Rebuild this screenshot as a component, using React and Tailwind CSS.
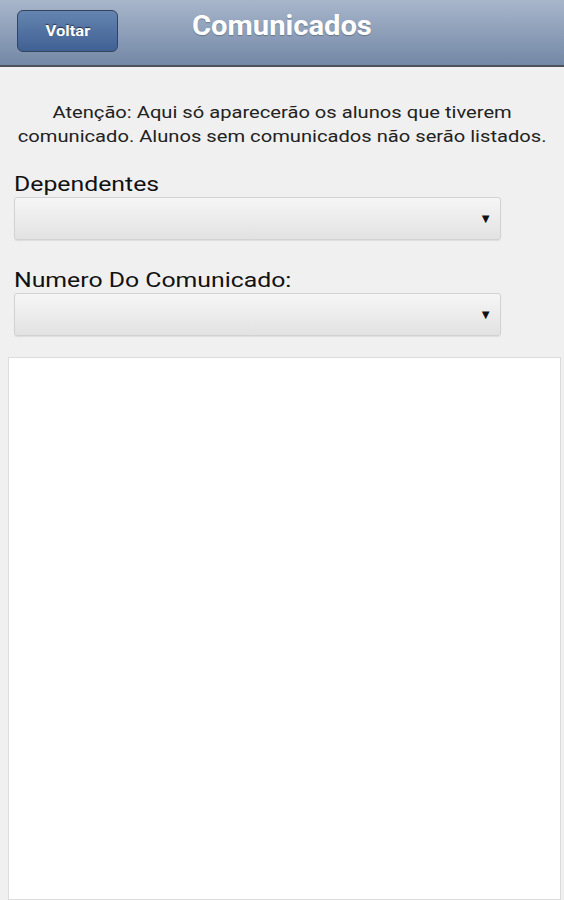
import React from "react";

const Select = () => (
  <div className="relative h-[43px] w-[487px] rounded-[3px] border border-[#d2d2d2] bg-gradient-to-b from-[#f6f6f6] to-[#e2e2e2] shadow-[0_1px_1px_rgba(0,0,0,0.08)]">
    <span className="absolute right-[8px] top-[11px] text-[13px] leading-[20px] text-[#111]">▼</span>
  </div>
);

const App = () => {
  return (
    <div className="flex h-[900px] w-[564px] flex-col overflow-hidden bg-[#f0f0f0] font-['Roboto',sans-serif]">
      <header className="relative flex h-[67px] shrink-0 items-start border-b-2 border-[#4d5359] bg-gradient-to-b from-[#a8b6cb] to-[#7388a6]">
        <button className="ml-[17px] mt-[10px] flex h-[42px] w-[101px] items-center justify-center rounded-[6px] border border-[#33445e] bg-gradient-to-b from-[#6584b0] to-[#3f6193] text-[14px] font-bold text-white [text-shadow:0_-1px_1px_rgba(0,0,0,0.6)]">
          <span className="inline-block scale-x-[1.18]">Voltar</span>
        </button>
        <h1 className="absolute left-[192px] top-[8px] origin-left scale-x-[1.08] text-[27px] font-bold leading-[36px] text-white [text-shadow:0_1px_1px_rgba(0,0,0,0.25)]">
          Comunicados
        </h1>
      </header>

      <p className="mt-[33px] text-center text-[17px] leading-[24px] text-[#222]">
        <span className="inline-block scale-x-[1.185]">
          Atenção: Aqui só aparecerão os alunos que tiverem
          <br />
          comunicado. Alunos sem comunicados não serão listados.
        </span>
      </p>

      <div className="ml-[14px] mt-[23px]">
        <label className="block origin-left scale-x-[1.24] text-[20px] leading-[26px] text-[#111]">Dependentes</label>
        <Select />
      </div>

      <div className="ml-[14px] mt-[27px]">
        <label className="block origin-left scale-x-[1.24] text-[20px] leading-[26px] text-[#111]">Numero Do Comunicado:</label>
        <Select />
      </div>

      <div className="ml-[8px] mt-[21px] w-[553px] flex-1 border border-[#dcdcdc] bg-white"></div>
    </div>
  );
};

export default App;
